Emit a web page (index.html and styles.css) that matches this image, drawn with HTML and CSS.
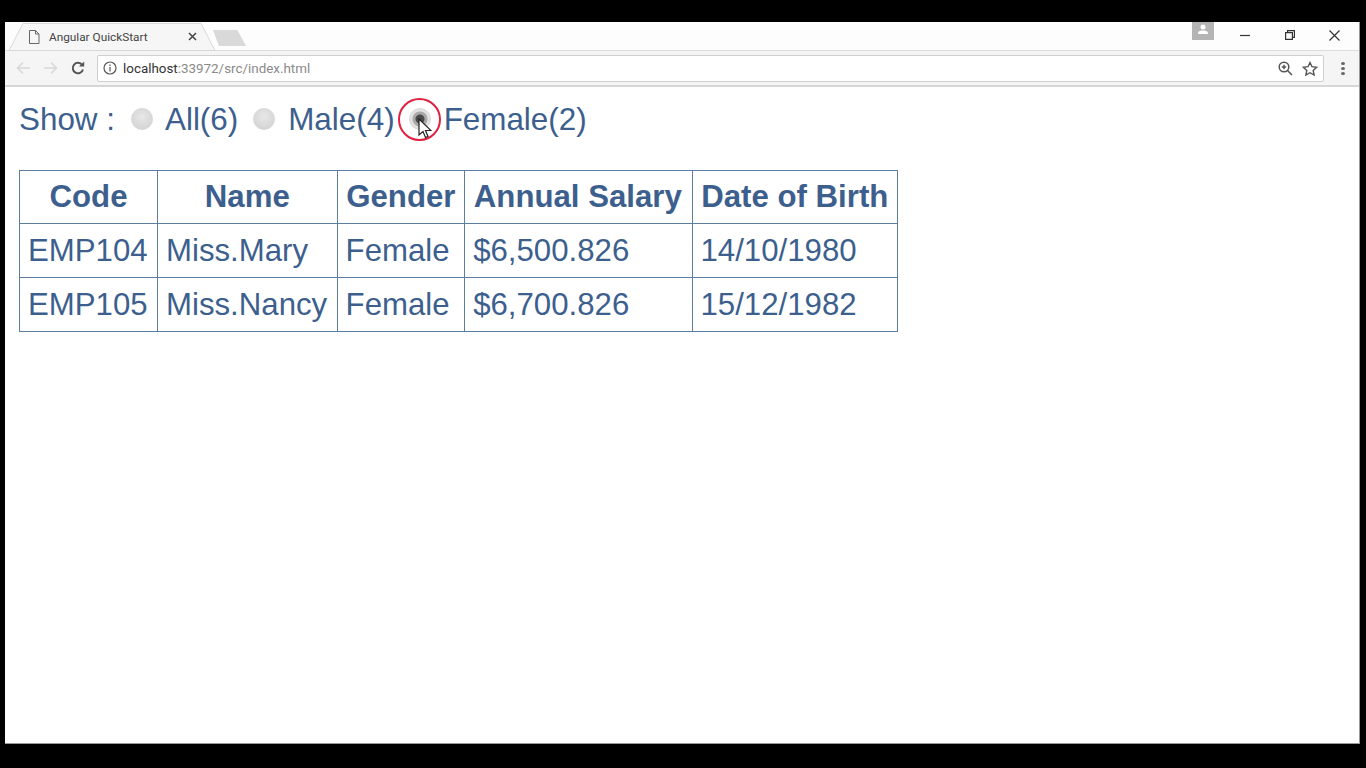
FILE: index.html
```html
<!DOCTYPE html>
<html lang="en">

<head>
    <meta charset="UTF-8">
    <title>Angular QuickStart</title>
    <link rel="stylesheet" href="styles.css">
</head>

<body>
    <div class="window">
        <div class="tabstrip">
            <div class="tab">
                <svg class="tab-shape" width="207" height="29" viewBox="0 0 207 29">
                    <path d="M1 28.500L15 1.500H193L207 28.500z" fill="#f6f6f6" stroke="#d8d8d8" />
                </svg>
                <svg class="tab-icon" width="12" height="14" viewBox="0 0 12 14" fill="none" stroke="#666" stroke-width="1">
                    <path d="M1.500 .5h6l3.500 3.500v9.500h-9.500z M7.500 .5v3.500h3.500" />
                </svg>
                <span class="tab-title">Angular QuickStart</span>
                <svg class="tab-close" width="9" height="9" viewBox="0 0 9 9" stroke="#444" stroke-width="1.500">
                    <path d="M1 1l7 7M8 1l-7 7" />
                </svg>
            </div>
            <div class="new-tab"></div>
            <div class="profile">
                <svg width="12" height="10" viewBox="0 0 12 10" fill="#fff">
                    <circle cx="6" cy="3" r="2.500" />
                    <path d="M1 10c0-3 2-3.500 5-3.500s5 .5 5 3.500z" />
                </svg>
            </div>
            <div class="win-buttons">
                <svg width="10" height="10" viewBox="0 0 10 10" stroke="#333" stroke-width="1.200" fill="none">
                    <path d="M0 5.500h10" />
                </svg>
                <svg width="10" height="10" viewBox="0 0 10 10" stroke="#333" stroke-width="1.200" fill="none">
                    <path d="M.6 2.600h6.800v6.800h-6.800z M2.600 2.600v-2h6.800v6.800h-2" />
                </svg>
                <svg width="11" height="11" viewBox="0 0 11 11" stroke="#333" stroke-width="1.200" fill="none">
                    <path d="M.5 .5l10 10M10.500 .5l-10 10" />
                </svg>
            </div>
        </div>

        <div class="toolbar">
            <svg class="nav" width="14" height="14" viewBox="0 0 14 14" stroke="#d8d8d8" stroke-width="1.600" fill="none">
                <path d="M14 7h-12M7 1.500l-5.500 5.500 5.500 5.500" />
            </svg>
            <svg class="nav" width="14" height="14" viewBox="0 0 14 14" stroke="#d8d8d8" stroke-width="1.600" fill="none">
                <path d="M0 7h12M7 1.500l5.500 5.500-5.500 5.500" />
            </svg>
            <svg class="nav nav-reload" width="14" height="14" viewBox="0 0 14 14" stroke="#555" stroke-width="2" fill="none">
                <path d="M12 8.500a5.200 5.200 0 1 1-.8-4.500" />
                <path d="M13.200 .4v5.200h-5.200z" fill="#555" stroke="none" />
            </svg>
            <div class="omnibox">
                <svg width="14" height="14" viewBox="0 0 14 14" stroke="#555" stroke-width="1.200" fill="none">
                    <circle cx="7" cy="7" r="6" />
                    <path d="M7 6v4.500M7 3.500v1.500" />
                </svg>
                <span class="url"><span class="host">localhost</span>:33972/src/index.html</span>
                <svg class="zoom-icon" width="15" height="15" viewBox="0 0 15 15" stroke="#555" stroke-width="1.500" fill="none">
                    <circle cx="6" cy="6" r="4.800" />
                    <path d="M9.500 9.500l4.500 4.500M3.800 6h4.400M6 3.800v4.400" />
                </svg>
                <svg width="16" height="15" viewBox="0 0 16 15" stroke="#555" stroke-width="1.400" fill="none">
                    <path d="M8 1.500l2 4.200 4.600.6-3.400 3.200.9 4.500-4.100-2.300-4.100 2.300.9-4.500-3.400-3.200 4.600-.6z" />
                </svg>
            </div>
            <div class="menu-dots"><i></i><i></i><i></i></div>
        </div>

        <main class="page">
            <div class="filter">
                <span class="filter-title">Show :</span>
                <input class="radio radio-all" type="radio" name="gender">
                <span class="filter-label">All(6)</span>
                <input class="radio radio-male" type="radio" name="gender">
                <span class="filter-label">Male(4)</span>
                <span class="radio-wrap">
                    <input class="radio radio-female" type="radio" name="gender" checked>
                    <span class="click-ring"></span>
                    <svg class="cursor" width="14" height="21" viewBox="0 0 14 21">
                        <path d="M1 1v16l4-3.500 2.500 6 2.500-1-2.500-6h5.500z" fill="#fff" stroke="#222" stroke-width="1.200" />
                    </svg>
                </span>
                <span class="filter-label">Female(2)</span>
            </div>

            <table class="employees">
                <thead>
                    <tr>
                        <th>Code</th>
                        <th>Name</th>
                        <th>Gender</th>
                        <th class="col-salary">Annual Salary</th>
                        <th>Date of Birth</th>
                    </tr>
                </thead>
                <tbody>
                    <tr>
                        <td>EMP104</td>
                        <td>Miss.Mary</td>
                        <td>Female</td>
                        <td>$6,500.826</td>
                        <td>14/10/1980</td>
                    </tr>
                    <tr>
                        <td>EMP105</td>
                        <td>Miss.Nancy</td>
                        <td>Female</td>
                        <td>$6,700.826</td>
                        <td>15/12/1982</td>
                    </tr>
                </tbody>
            </table>
        </main>
    </div>
</body>

</html>
```

FILE: styles.css
```css
* {
    box-sizing: border-box;
}

html,
body {
    height: 100%;
}

body {
    margin: 0;
    padding: 22px 6px 24px 5px;
    background-color: #000;
    font-family: "Liberation Sans", Arial, sans-serif;
    overflow: hidden;
}

.window {
    height: 100%;
    display: flex;
    flex-direction: column;
    background-color: #fff;
    border-right: 1px solid #999;
    border-bottom: 1px solid #999;
}

.tabstrip {
    height: 29px;
    display: flex;
    align-items: flex-start;
    background-color: #fdfdfd;
    border-bottom: 1px solid #dcdcdc;
    flex-shrink: 0;
}

.tab {
    position: relative;
    z-index: 1;
    width: 207px;
    height: 29px;
    margin-left: 3px;
    padding: 0 18px 0 20px;
    display: flex;
    align-items: center;
    font-family: Roboto, sans-serif;
    font-size: 11.800px;
    color: #444;
}

.tab-shape {
    position: absolute;
    left: 0;
    top: 0;
    z-index: -1;
}

.tab-icon {
    margin-right: 9px;
}

.tab-title {
    flex: 1;
}

.new-tab {
    width: 33px;
    height: 16px;
    margin: 8px 0 0 -2px;
    background-color: #d9d9d9;
    clip-path: polygon(0 0, 74% 0, 100% 100%, 18% 100%);
}

.profile {
    width: 22px;
    height: 18px;
    margin-left: auto;
    padding-top: 2px;
    display: flex;
    justify-content: center;
    align-items: flex-start;
    background-color: #b4b4b4;
}

.win-buttons {
    width: 145px;
    height: 26px;
    padding: 0 19px 0 26px;
    display: flex;
    justify-content: space-between;
    align-items: center;
}

.toolbar {
    height: 36px;
    padding: 0 14px 0 11px;
    display: flex;
    align-items: center;
    gap: 14px;
    background-color: #f5f5f5;
    border-bottom: 2px solid #d6d6d6;
    flex-shrink: 0;
}

.nav-reload {
    margin-left: -1px;
}

.omnibox {
    flex: 1;
    height: 27px;
    margin-left: -2px;
    padding: 0 5px;
    display: flex;
    align-items: center;
    background-color: #fff;
    border: 1px solid #cfcfcf;
    border-radius: 2px;
    font-family: Roboto, sans-serif;
    font-size: 13.400px;
}

.url {
    flex: 1;
    margin-left: 6px;
    color: #8a8a8a;
}

.host {
    color: #333;
}

.zoom-icon {
    margin-right: 9px;
}

.menu-dots {
    width: 4px;
    margin-left: 3px;
    display: flex;
    flex-direction: column;
    gap: 2px;
}

.menu-dots i {
    height: 3px;
    background-color: #666;
    border-radius: 50%;
}

.page {
    flex: 1;
    padding: 14px 14px 0;
    color: #3d5f8e;
}

.filter {
    height: 36px;
    padding-top: 2px;
    display: flex;
    align-items: center;
    font-size: 31.400px;
}

.radio {
    appearance: none;
    width: 22px;
    height: 22px;
    margin: 0;
    background: radial-gradient(circle at 50% 40%, #e8e8e8, #cfcfcf);
    border: 1px solid #d8d8d8;
    border-radius: 50%;
}

.radio-all {
    margin: 0 12px 2px 16px;
}

.radio-male {
    margin: 0 13px 2px 15px;
}

.radio-wrap {
    position: relative;
    display: flex;
    margin: 0 13px 2px 14px;
}

.radio-female {
    background: radial-gradient(circle, #4a4a4a 0 4px, #a9a9a9 5px 7px, #e2e2e2 8px);
}

.click-ring {
    position: absolute;
    left: -11px;
    top: -10px;
    width: 43px;
    height: 43px;
    border: 2px solid #e0213f;
    border-radius: 50%;
}

.cursor {
    position: absolute;
    left: 9px;
    top: 10px;
}

.employees {
    margin-top: 33px;
    border-collapse: collapse;
    font-size: 31.200px;
}

.employees th,
.employees td {
    padding: 8px 9.400px 8px 8px;
    border: 1px solid #5d7d9e;
    white-space: nowrap;
}

.employees th {
    padding-left: 8.700px;
    padding-right: 8.700px;
    line-height: 36px;
}

.employees .col-salary {
    padding-right: 9.700px;
}

.employees td {
    line-height: 37px;
    text-align: left;
}
```
